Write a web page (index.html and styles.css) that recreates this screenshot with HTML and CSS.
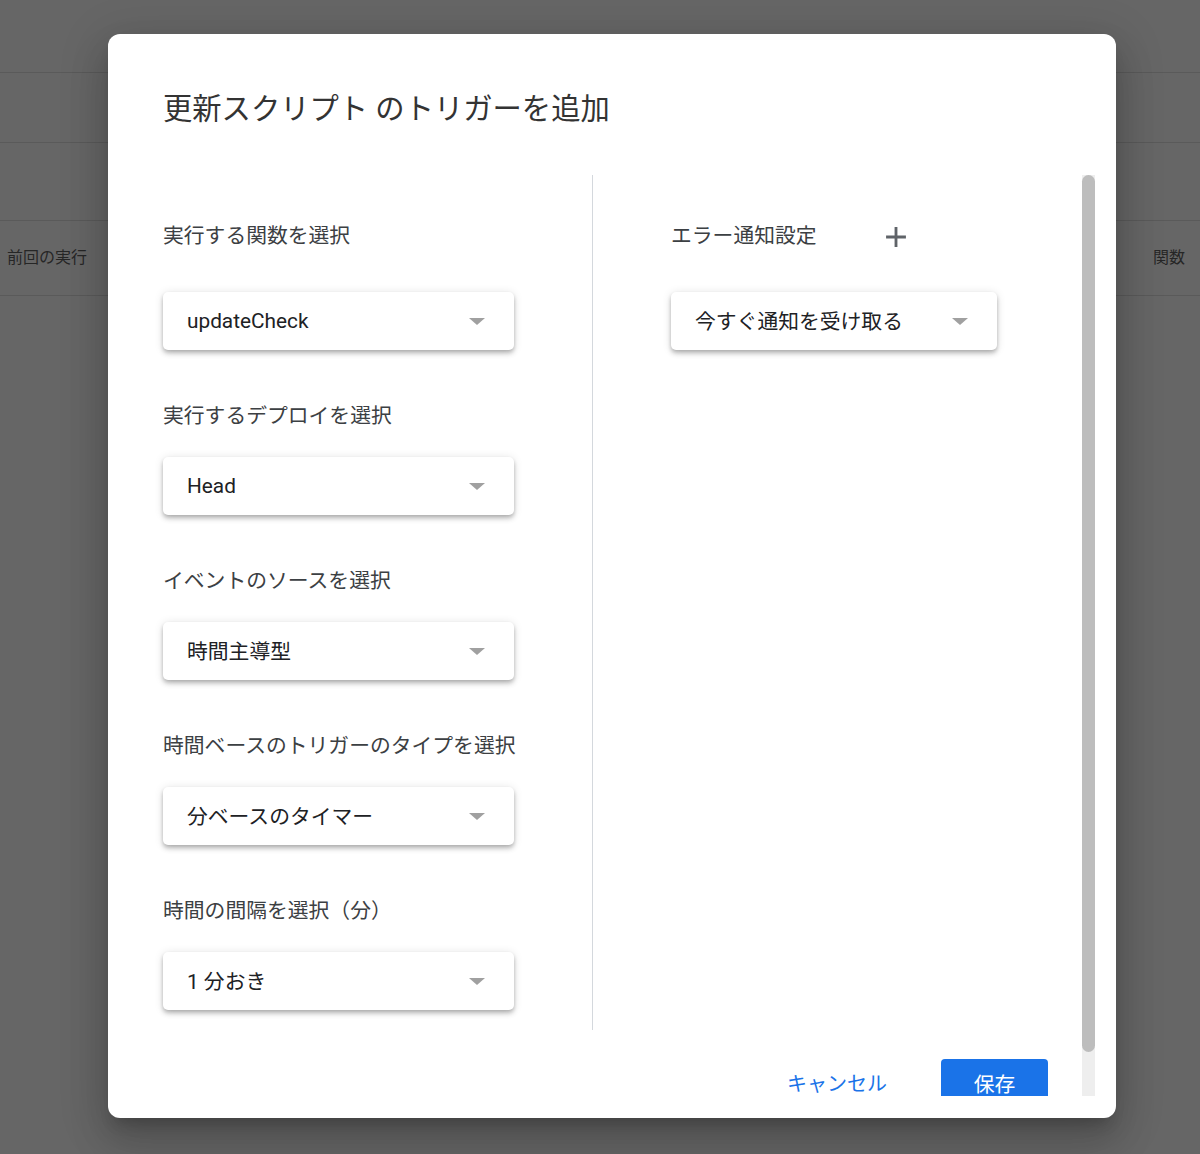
FILE: index.html
```html
<!DOCTYPE html>
<html lang="ja">
<head>
<meta charset="utf-8">
<title>トリガーを追加</title>
<link rel="stylesheet" href="styles.css">
</head>
<body>
<div class="page">
  <div class="bg-row r1"></div>
  <div class="bg-row r2"></div>
  <div class="bg-row r3"></div>
  <div class="bg-row r4">
    <span class="bg-cell">前回の実行</span>
    <span class="bg-cell bg-cell-fn">関数</span>
  </div>
</div>

<div class="dialog">
  <h1 class="dialog-title">更新スクリプト のトリガーを追加</h1>
  <div class="dialog-body">
    <div class="scroll-content">
      <div class="columns">
        <div class="col col-left">
          <div class="label-row"><span class="label">実行する関数を選択</span></div>
          <div class="select"><span class="select-value">updateCheck</span><span class="arrow"></span></div>

          <div class="label label-next">実行するデプロイを選択</div>
          <div class="select"><span class="select-value">Head</span><span class="arrow"></span></div>

          <div class="label label-next">イベントのソースを選択</div>
          <div class="select"><span class="select-value cjk">時間主導型</span><span class="arrow"></span></div>

          <div class="label label-next">時間ベースのトリガーのタイプを選択</div>
          <div class="select"><span class="select-value cjk">分ベースのタイマー</span><span class="arrow"></span></div>

          <div class="label label-next">時間の間隔を選択（分）</div>
          <div class="select"><span class="select-value cjk">1 分おき</span><span class="arrow"></span></div>
        </div>
        <div class="col col-right">
          <div class="label-row">
            <span class="label">エラー通知設定</span>
            <button class="add-btn" type="button" aria-label="追加">
              <svg viewBox="0 0 24 24" width="34" height="34"><path d="M19 13h-6v6h-2v-6H5v-2h6V5h2v6h6v2z" fill="#5f6368"/></svg>
            </button>
          </div>
          <div class="select select-narrow"><span class="select-value cjk">今すぐ通知を受け取る</span><span class="arrow"></span></div>
        </div>
      </div>
      <div class="actions">
        <button class="btn-text" type="button">キャンセル</button>
        <button class="btn-primary" type="button">保存</button>
      </div>
    </div>
    <div class="scrollbar"><div class="thumb"></div></div>
  </div>
</div>
</body>
</html>
```

FILE: styles.css
```css
* { box-sizing: border-box; }

html, body {
  margin: 0;
  padding: 0;
}

body {
  width: 1200px;
  height: 1154px;
  background: #666666;
  font-family: Roboto, "Noto Sans CJK JP", sans-serif;
  position: relative;
  overflow: hidden;
}

/* background page under the overlay */
.page {
  display: flex;
  flex-direction: column;
}

.bg-row {
  border-bottom: 1px solid #5a5a5a;
}

.r1 { height: 73px; }
.r2 { height: 70px; }
.r3 { height: 78px; }
.r4 {
  height: 75px;
  display: flex;
  align-items: center;
  padding: 0 15px 4px 7px;
}

.bg-cell {
  font-size: 16px;
  color: #262626;
}

.bg-cell-fn { margin-left: auto; }

/* dialog */
.dialog {
  position: absolute;
  left: 108px;
  top: 34px;
  width: 1008px;
  height: 1084px;
  background: #ffffff;
  border-radius: 12px;
  box-shadow: 0 11px 15px -7px rgba(0,0,0,.2),
              0 24px 38px 3px rgba(0,0,0,.14),
              0 9px 46px 8px rgba(0,0,0,.12);
  display: flex;
  flex-direction: column;
  padding: 0 21px 22px 0;
}

.dialog-title {
  margin: 0;
  padding: 55px 0 46px 55px;
  font-size: 29.3px;
  font-weight: 400;
  line-height: 40px;
  color: #333333;
}

.dialog-body {
  flex: 1;
  display: flex;
  min-height: 0;
}

.scroll-content {
  flex: 1;
  overflow: hidden;
  padding-left: 55px;
}

.columns {
  display: flex;
}

.col-left {
  width: 429px;
  padding: 30px 0 20px;
}

.col-right {
  flex: 1;
  border-left: 1px solid #d4d8dd;
  padding: 30px 0 20px 78px;
}

.label-row {
  height: 60px;
  display: flex;
  align-items: center;
  padding-top: 1px;
}

.label {
  font-size: 20.8px;
  line-height: 28px;
  color: #3c4043;
}

.label-next {
  margin-top: 52px;
}

.select {
  margin-top: 27px;
  width: 351px;
  height: 58px;
  display: flex;
  align-items: center;
  padding: 0 29px 0 24px;
  background: #fff;
  border-radius: 5px;
  box-shadow: 0 2px 4px -1px rgba(0,0,0,.2),
              0 4px 5px 0 rgba(0,0,0,.14),
              0 1px 10px 0 rgba(0,0,0,.12);
}

.select-narrow {
  width: 326px;
}

.select-value {
  flex: 1;
  font-size: 20.8px;
  color: #202124;
  white-space: nowrap;
}

.select-value.cjk {
  padding-bottom: 3px;
}

.arrow {
  width: 0;
  height: 0;
  border-left: 8px solid transparent;
  border-right: 8px solid transparent;
  border-top: 7px solid #a0a0a0;
}

.add-btn {
  margin-left: 55px;
  width: 48px;
  height: 48px;
  border: 0;
  padding: 2px 0 0;
  background: transparent;
  display: flex;
  align-items: center;
  justify-content: center;
}

.actions {
  margin-top: 29px;
  display: flex;
  justify-content: flex-end;
  align-items: center;
  padding-right: 34px;
}

.btn-text, .btn-primary {
  font-family: Roboto, "Noto Sans CJK JP", sans-serif;
  height: 48px;
  border: 0;
  border-radius: 4px;
  cursor: pointer;
  padding-bottom: 2px;
}

.btn-text {
  font-size: 20px;
  background: transparent;
  color: #1a73e8;
  padding-left: 24px;
  padding-right: 24px;
  margin-right: 30px;
}

.btn-primary {
  font-size: 20.8px;
  background: #1a73e8;
  color: #ffffff;
  width: 107px;
  padding-left: 0;
  padding-right: 0;
}

.scrollbar {
  width: 13px;
  background: #eeeeee;
  display: flex;
  flex-direction: column;
}

.thumb {
  height: 877px;
  background: #bdbdbd;
  border-radius: 7px;
}
```
